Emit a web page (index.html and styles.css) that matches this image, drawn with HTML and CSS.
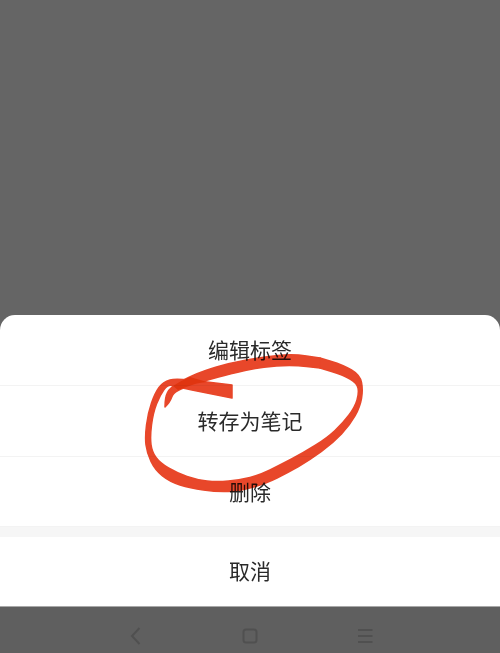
FILE: index.html
```html
<!DOCTYPE html>
<html lang="zh-CN">
<head>
    <meta charset="UTF-8">
    <meta name="viewport" content="width=device-width, initial-scale=1.0">
    <title>Note menu</title>
    <link rel="stylesheet" href="styles.css">
</head>
<body>

    <div class="screen">
        <div class="backdrop"></div>

        <!-- Action sheet -->
        <div class="sheet">
            <div class="sheet-item">编辑标签</div>
            <div class="sheet-item">转存为笔记</div>
            <div class="sheet-item sheet-last">删除</div>
            <div class="sheet-gap"></div>
            <div class="sheet-item sheet-cancel">取消</div>
        </div>

        <!-- System navigation -->
        <div class="nav-bar">
            <svg class="nav-icon" viewBox="0 0 20 20"><path d="M13.500 2 6 10l7.500 8"/></svg>
            <svg class="nav-icon" viewBox="0 0 20 20"><rect x="3.500" y="3.500" width="13" height="13" rx="2.500"/></svg>
            <svg class="nav-icon" viewBox="0 0 20 20"><path d="M4 4h14.500M4 10h14.500M4 16h14.500"/></svg>
        </div>

        <!-- Hand drawn marker circle -->
        <svg class="marker" viewBox="0 0 500 653">
            <path d="M232 385 L207 382 Q177 378 170 380 Q163 382 159 387.500 Q155 393 151.500 403 Q148 413 146.500 425 Q145 437 146 445 Q147 453 151 461.500 Q155 470 162.500 476 Q170 482 180 485 Q190 488 203.500 490 Q217 492 228.500 491.500 Q240 491 253.500 487 Q267 483 277 478 Q287 473 298.500 466.500 Q310 460 321.500 451.500 Q333 443 341.500 434 Q350 425 355 416 Q360 407 361.500 398.500 Q363 390 361.500 382.500 Q360 375 351.500 370 Q343 365 331.500 361.500 L320 358 L320 368 L331.500 371.500 Q343 375 350 379 Q357 383 358 388 Q359 393 357 400 Q355 407 349 415 Q343 423 335 430.500 Q327 438 315 445.500 Q303 453 291.500 459 Q280 465 270 470 Q260 475 250 477.500 Q240 480 228.500 481 Q217 482 207 481 Q197 480 187 476.500 Q177 473 168.500 468 Q160 463 156 457.500 Q152 452 151 444.500 Q150 437 151.500 425 Q153 413 156.500 404 Q160 395 164 389.500 Q168 384 172.500 385.500 Q177 387 192 390 L207 393 L232 398 Z"/>
            <path d="M320 358 L306.500 356 Q293 354 278 355.500 Q263 357 246.500 360 Q230 363 216.500 367 Q203 371 193 375.500 Q183 380 176.500 384 Q170 388 167.500 392.500 Q165 397 165 407 Q170 402 171.500 397.500 Q173 393 178 390.500 Q183 388 195 384 Q207 380 218.500 377 Q230 374 245 370.500 Q260 367 276.500 366 Q293 365 306.500 366.500 L320 368 Z"/>
            <path class="marker-cross" d="M173 386 Q182 380 190 377 L207 382 Q198 383 195 384 Q186 387 178 390 Z"/>
        </svg>
    </div>

</body>
</html>
```

FILE: styles.css
```css
html, body {
    margin: 0;
    padding: 0;
}
body {
    font-family: "Liberation Sans", "Noto Sans CJK SC", sans-serif;
    background-color: #656565;
}
.screen {
    position: relative;
    width: 500px;
    height: 653px;
    display: flex;
    flex-direction: column;
    overflow: hidden;
}
.backdrop {
    height: 315px;
    background-color: #656565;
}
.sheet {
    height: 291px;
    background-color: #fff;
    border-radius: 15px 15px 0 0;
    display: flex;
    flex-direction: column;
    border-bottom: 1px solid #a8a8a8;
}
.sheet-item {
    box-sizing: border-box;
    height: 71px;
    padding-bottom: 3px;
    display: flex;
    align-items: center;
    justify-content: center;
    font-size: 21px;
    color: #2a2a2a;
    border-bottom: 1px solid #f3f3f3;
}
.sheet-last {
    height: 70px;
    padding-bottom: 1px;
}
.sheet-gap {
    height: 10px;
    background-color: #f6f6f6;
}
.sheet-cancel {
    height: 69px;
    padding-bottom: 4px;
    border-bottom: none;
}
.nav-bar {
    box-sizing: border-box;
    height: 46px;
    padding-top: 12px;
    background-color: #5f5f5f;
    display: flex;
    justify-content: center;
    align-items: center;
    gap: 94px;
}
.nav-icon {
    width: 20px;
    height: 20px;
    fill: none;
    stroke: #505050;
    stroke-width: 2;
}
.marker {
    position: absolute;
    left: 0;
    top: 0;
    width: 500px;
    height: 653px;
    fill: #e8472a;
    stroke: #e8472a;
    stroke-width: 1.5;
    stroke-linejoin: round;
    mix-blend-mode: multiply;
    filter: blur(0.5px);
    pointer-events: none;
}
.marker-cross {
    fill: #e03510;
    stroke: none;
}
```
